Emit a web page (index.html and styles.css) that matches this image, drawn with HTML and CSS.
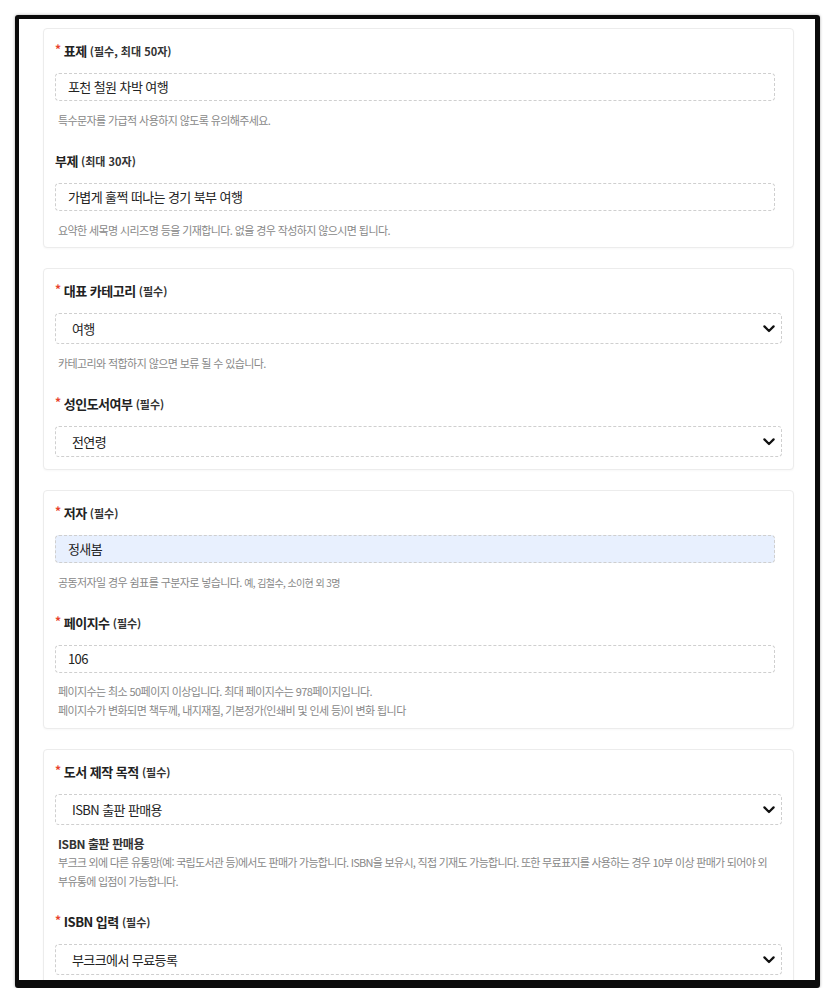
FILE: index.html
```html
<!DOCTYPE html>
<html lang="ko">
<head>
<meta charset="utf-8">
<title>도서 정보</title>
<link rel="stylesheet" href="styles.css">
</head>
<body>
<div class="page">
  <div class="frame">
    <div class="content">
      <section class="card">
        <div class="field">
          <div class="label"><span class="req">*</span> 표제 <small>(필수, 최대 50자)</small></div>
          <div class="input">포천 철원 차박 여행</div>
          <p class="help">특수문자를 가급적 사용하지 않도록 유의해주세요.</p>
        </div>
        <div class="field">
          <div class="label">부제 <small>(최대 30자)</small></div>
          <div class="input">가볍게 훌쩍 떠나는 경기 북부 여행</div>
          <p class="help">요약한 세목명 시리즈명 등을 기재합니다. 없을 경우 작성하지 않으시면 됩니다.</p>
        </div>
      </section>

      <section class="card">
        <div class="field">
          <div class="label"><span class="req">*</span> 대표 카테고리 <small>(필수)</small></div>
          <div class="select"><span>여행</span><svg class="chev" width="12" height="8" viewBox="0 0 12 8"><path d="M1.4 1.4 L6 6 L10.6 1.4" fill="none" stroke="#111" stroke-width="2.2" stroke-linecap="round" stroke-linejoin="round"/></svg></div>
          <p class="help">카테고리와 적합하지 않으면 보류 될 수 있습니다.</p>
        </div>
        <div class="field">
          <div class="label"><span class="req">*</span> 성인도서여부 <small>(필수)</small></div>
          <div class="select last"><span>전연령</span><svg class="chev" width="12" height="8" viewBox="0 0 12 8"><path d="M1.4 1.4 L6 6 L10.6 1.4" fill="none" stroke="#111" stroke-width="2.2" stroke-linecap="round" stroke-linejoin="round"/></svg></div>
        </div>
      </section>

      <section class="card">
        <div class="field">
          <div class="label"><span class="req">*</span> 저자 <small>(필수)</small></div>
          <div class="input filled">정새봄</div>
          <p class="help">공동저자일 경우 쉼표를 구분자로 넣습니다. <span class="tiny">예, 김철수, 소이현 외 3명</span></p>
        </div>
        <div class="field">
          <div class="label"><span class="req">*</span> 페이지수 <small>(필수)</small></div>
          <div class="input">106</div>
          <p class="help multi">페이지수는 최소 50페이지 이상입니다. 최대 페이지수는 978페이지입니다.<br>페이지수가 변화되면 책두께, 내지재질, 기본정가(인쇄비 및 인세 등)이 변화 됩니다</p>
        </div>
      </section>

      <section class="card">
        <div class="field">
          <div class="label"><span class="req">*</span> 도서 제작 목적 <small>(필수)</small></div>
          <div class="select"><span>ISBN 출판 판매용</span><svg class="chev" width="12" height="8" viewBox="0 0 12 8"><path d="M1.4 1.4 L6 6 L10.6 1.4" fill="none" stroke="#111" stroke-width="2.2" stroke-linecap="round" stroke-linejoin="round"/></svg></div>
          <div class="info">
            <p class="info-title">ISBN 출판 판매용</p>
            <p class="info-desc">부크크 외에 다른 유통망(예: 국립도서관 등)에서도 판매가 가능합니다. ISBN을 보유시, 직접 기재도 가능합니다. 또한 무료표지를 사용하는 경우 10부 이상 판매가 되어야 외<br>부유통에 입점이 가능합니다.</p>
          </div>
        </div>
        <div class="field isbn">
          <div class="label"><span class="req">*</span> ISBN 입력 <small>(필수)</small></div>
          <div class="select"><span>부크크에서 무료등록</span><svg class="chev" width="12" height="8" viewBox="0 0 12 8"><path d="M1.4 1.4 L6 6 L10.6 1.4" fill="none" stroke="#111" stroke-width="2.2" stroke-linecap="round" stroke-linejoin="round"/></svg></div>
        </div>
      </section>
    </div>
  </div>
</div>
</body>
</html>
```

FILE: styles.css
```css
* {
  box-sizing: border-box;
}

html, body {
  margin: 0;
  padding: 0;
  background: #fff;
}

body {
  font-family: "Noto Sans CJK KR", "Noto Sans", sans-serif;
  color: #222;
}

.page {
  padding: 15px 15px 0 15px;
}

.frame {
  height: 973px;
  border: 4px solid #0b0b0b;
  border-right-width: 5px;
  border-bottom-width: 8px;
  border-radius: 3px;
  overflow: hidden;
  box-shadow: 0 0 3px rgba(0, 0, 0, 0.35);
  background: #fff;
}

.content {
  padding: 9px 21px 0 24px;
  display: flex;
  flex-direction: column;
  gap: 20px;
}

.card {
  border: 1px solid #ececec;
  border-radius: 4px;
  padding: 11px 11px 8px;
  background: #fff;
  box-shadow: 0 1px 2px rgba(0, 0, 0, 0.03);
}

.field + .field {
  margin-top: 21px;
}

.field.isbn {
  margin-top: 20px;
}

.label {
  height: 22px;
  font-size: 13px;
  font-weight: 700;
  line-height: 22px;
  letter-spacing: -0.5px;
  margin-bottom: 11px;
  color: #222;
  white-space: nowrap;
}

.label small {
  font-size: 11px;
  line-height: 1;
  letter-spacing: 0;
  color: #333;
}

.req {
  color: #e8412c;
  font-size: 12px;
  line-height: 1;
  vertical-align: 2px;
}

.input {
  width: calc(100% - 7px);
  height: 28px;
  border: 1px dashed #cfcfcf;
  border-radius: 4px;
  padding: 0 12px;
  font-size: 13px;
  line-height: 26px;
  letter-spacing: -0.6px;
  color: #222;
  background: #fff;
}

.input.filled {
  background: #e8f0fe;
}

.select {
  display: flex;
  align-items: center;
  justify-content: space-between;
  height: 31px;
  border: 1px dashed #cfcfcf;
  border-radius: 4px;
  padding: 0 6px 0 16px;
  font-size: 13px;
  line-height: 1;
  letter-spacing: -0.6px;
  color: #222;
  background: #fff;
}

.select.last {
  margin-bottom: 4px;
}

.chev {
  display: block;
  flex: none;
}

.help {
  margin: 10px 0 0;
  padding-left: 3px;
  font-size: 11px;
  line-height: 18px;
  letter-spacing: -0.6px;
  color: #888;
  white-space: nowrap;
}

.help.multi {
  margin-top: 9px;
  line-height: 19px;
}

.tiny {
  font-size: 10px;
  line-height: 1;
  letter-spacing: -0.6px;
}

.info {
  margin-top: 10px;
  padding-left: 3px;
}

.info p {
  margin: 0;
}

.info-title {
  font-size: 12px;
  font-weight: 700;
  line-height: 18px;
  letter-spacing: -0.4px;
  color: #333;
}

.info-desc {
  font-size: 11px;
  line-height: 19px;
  letter-spacing: -0.72px;
  color: #888;
  white-space: nowrap;
}
```
